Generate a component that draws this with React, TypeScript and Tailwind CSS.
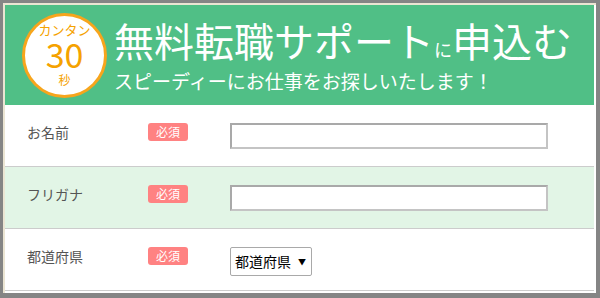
const rows = [
  { label: "お名前", kind: "input", bg: "bg-white" },
  { label: "フリガナ", kind: "input", bg: "bg-[#e2f5e6]" },
  { label: "都道府県", kind: "select", bg: "bg-white" },
] as const;

function Badge() {
  return (
    <span className="flex h-[18px] w-[40px] shrink-0 items-center justify-center rounded-[3px] bg-[#ff8282] text-[12px] leading-none text-white">
      必須
    </span>
  );
}

function Row({ label, kind, bg }: (typeof rows)[number]) {
  return (
    <div className={`flex h-[62px] shrink-0 items-start border-b border-[#cccccc] pt-[18px] ${bg}`}>
      <span className="w-[143px] shrink-0 pl-[22px] text-[14px] leading-[18px] text-[#555555]">{label}</span>
      <Badge />
      <div className="ml-[42px]">
        {kind === "input" ? (
          <div className="h-[26px] w-[318px] border-2 border-[#c4c4c4] border-t-[#a9a9a9] border-l-[#a9a9a9] bg-white" />
        ) : (
          <div className="flex h-[29px] w-[82px] items-center gap-[7px] rounded-[2px] border border-[#a9a9a9] bg-white pl-[4px] text-[14px] text-black">
            <span>都道府県</span>
            <span className="text-[8px]">▼</span>
          </div>
        )}
      </div>
    </div>
  );
}

export default function App() {
  return (
    <div
      className="h-[298px] w-[600px] overflow-hidden bg-[#858585] pl-[3px] pt-[3px]"
      style={{ fontFamily: '"Noto Sans CJK JP", "Noto Sans", sans-serif' }}
    >
      <div className="flex h-[290px] w-[593px] flex-col overflow-hidden border-l-2 border-t-2 border-[#ebe5d3] bg-white pr-[2px]">
        <header className="flex h-[100px] shrink-0 items-center bg-[#50bf86] pl-[17px]">
          <div className="flex h-[85px] w-[85px] shrink-0 flex-col items-center rounded-full border-[3px] border-[#f7a51c] bg-white pt-[7px] text-[#f5a200]">
            <span className="text-[13px] leading-[14px]">カンタン</span>
            <span className="text-[34px] leading-[34px]">30</span>
            <span className="mt-[2px] text-[12px] leading-[13px]">秒</span>
          </div>
          <div className="ml-[7px] flex flex-col text-white">
            <h1 className="text-[40px] leading-[42px]">
              無料転職サポート<span className="text-[18px]">に</span>申込む
            </h1>
            <p className="text-[19px] leading-[22px]">スピーディーにお仕事をお探しいたします！</p>
          </div>
        </header>
        {rows.map((r) => (
          <Row key={r.label} {...r} />
        ))}
      </div>
    </div>
  );
}
